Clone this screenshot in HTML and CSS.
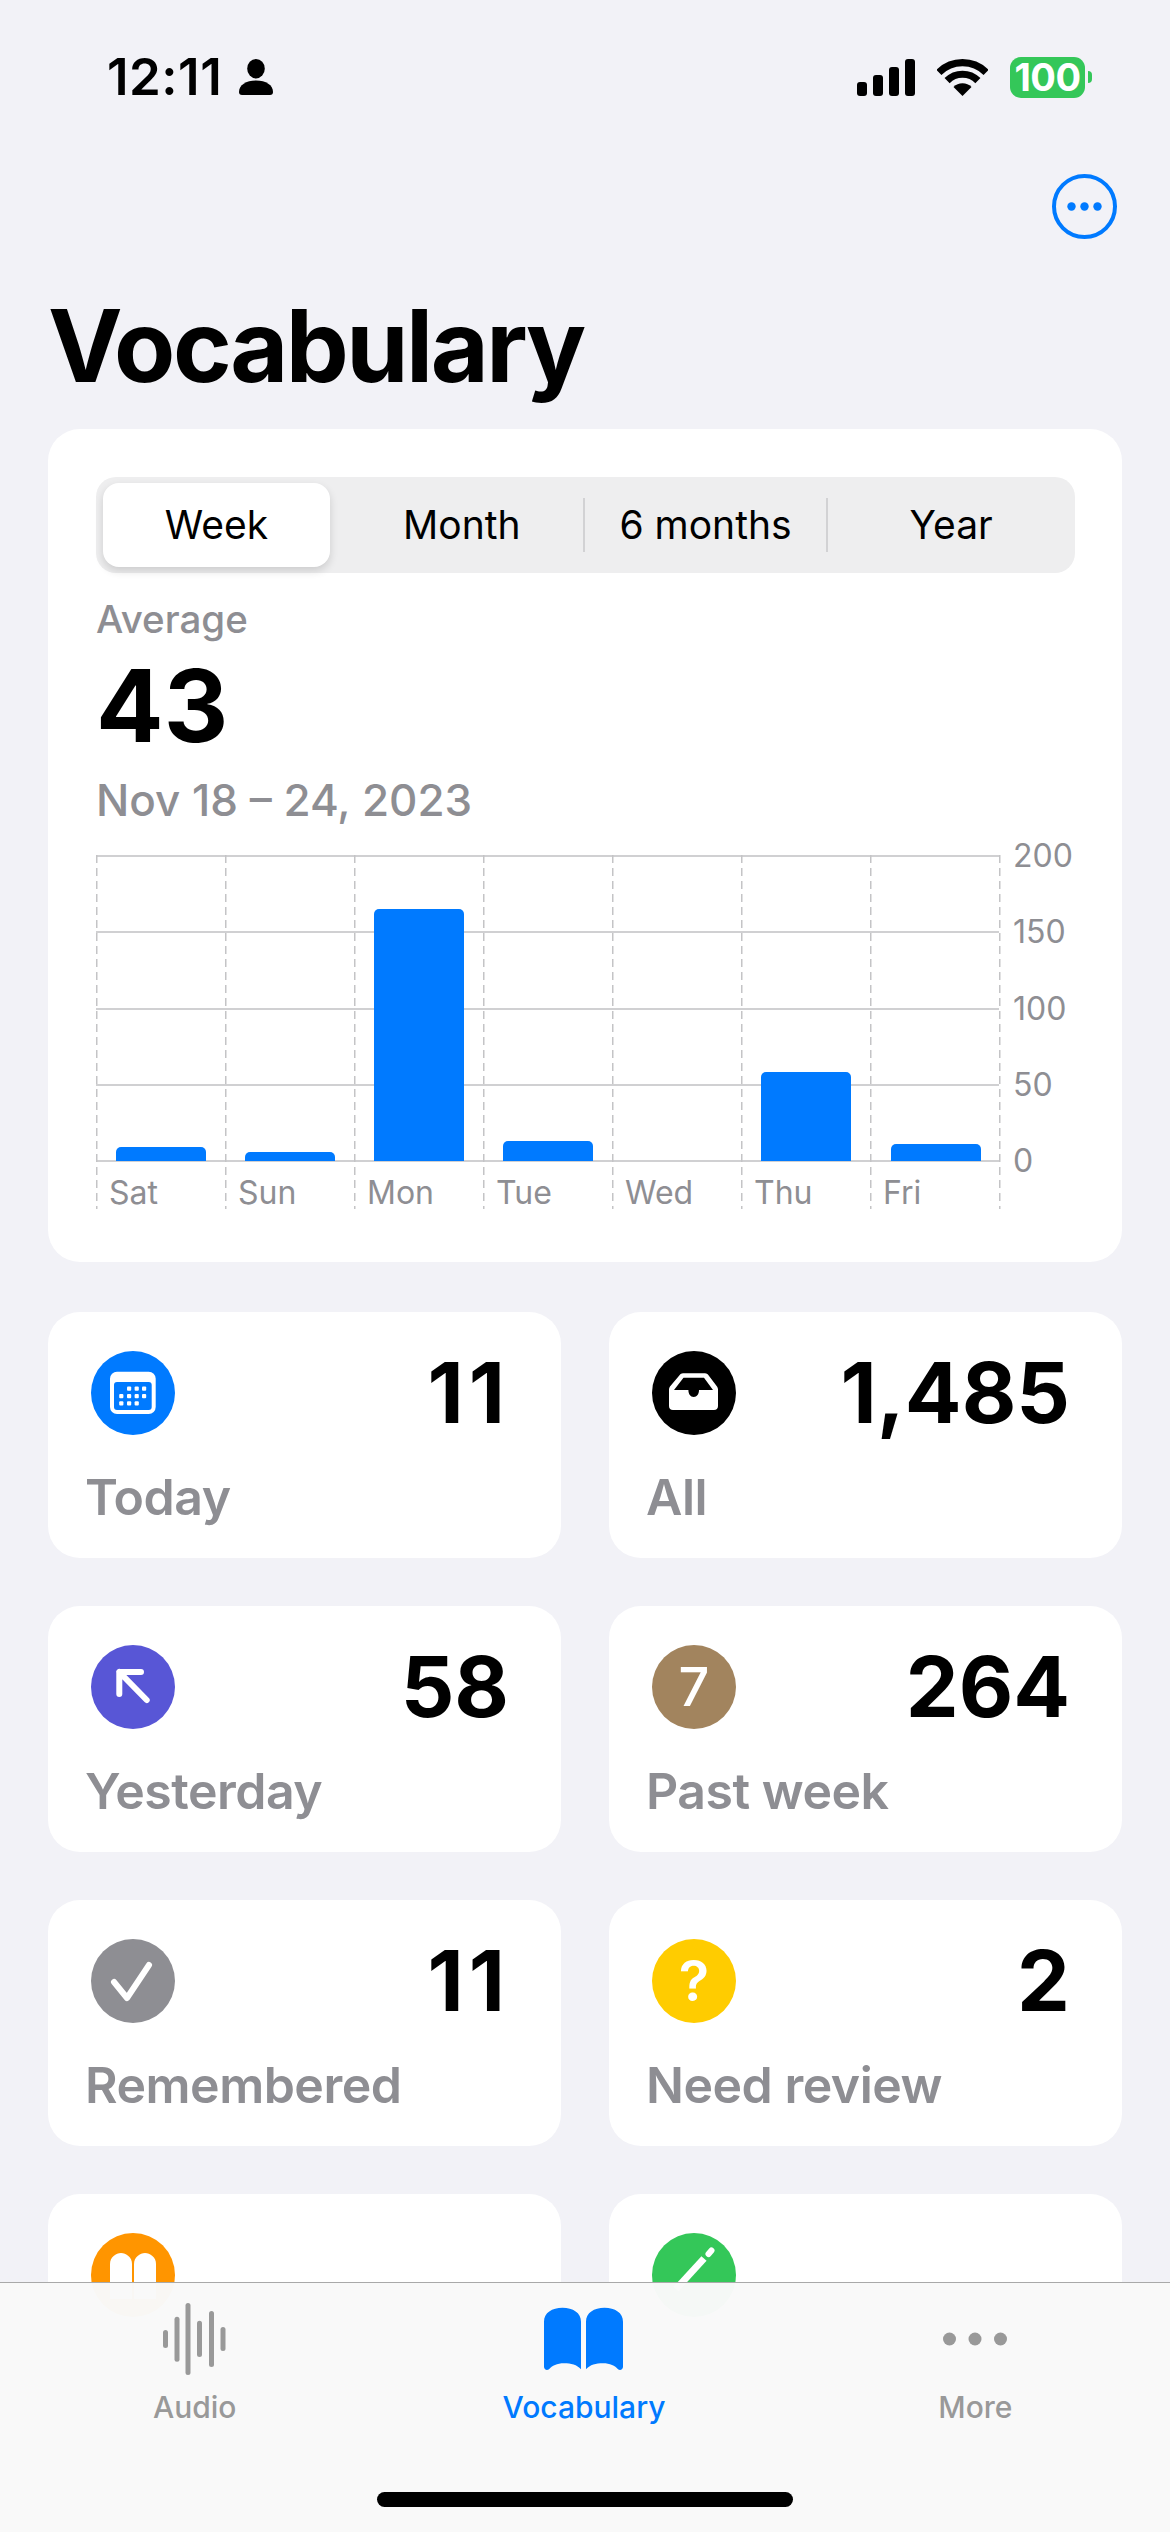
FILE: index.html
```html
<!DOCTYPE html>
<html lang="en">

<head>
    <meta charset="UTF-8">
    <meta name="viewport" content="width=device-width, initial-scale=1.0">
    <title>Vocabulary</title>
    <link rel="stylesheet" href="styles.css">
</head>

<body>
    <div class="screen">
        <div class="status-bar">
            <div class="status-left">
                <span class="status-time">12:11</span>
                <svg class="icon-person" width="34" height="36" viewBox="0 0 34 36">
                    <ellipse cx="17" cy="9.7" rx="8.8" ry="9.7" />
                    <path d="M0 33C0 26 7 21.5 17 21.5S34 26 34 33C34 35 33 36 31 36H3C1 36 0 35 0 33Z" />
                </svg>
            </div>
            <div class="status-right">
                <svg class="icon-signal" width="58" height="37" viewBox="0 0 58 37">
                    <rect x="0" y="23" width="10" height="14" rx="3" />
                    <rect x="16" y="16" width="10" height="21" rx="3" />
                    <rect x="32" y="8" width="10" height="29" rx="3" />
                    <rect x="48" y="0" width="10" height="37" rx="3" />
                </svg>
                <svg class="icon-wifi" width="51" height="37" viewBox="0 0 51 37">
                    <path d="M1.9 13.4A33.4 33.4 0 0 1 49.1 13.4" fill="none" stroke="#000" stroke-width="7.2" />
                    <path d="M10.1 21.6A21.8 21.8 0 0 1 40.9 21.6" fill="none" stroke="#000" stroke-width="7.2" />
                    <path d="M25.5 37L16.5 28A12.7 12.7 0 0 1 34.5 28Z" />
                </svg>
                <div class="battery">
                    <span class="battery-level">100</span>
                    <span class="battery-cap"></span>
                </div>
            </div>
        </div>

        <div class="nav-bar">
            <button class="more-button">
                <svg width="65" height="65" viewBox="0 0 65 65">
                    <circle cx="32.5" cy="32.5" r="30.5" fill="none" stroke="#007aff" stroke-width="4" />
                    <circle cx="19.5" cy="32.5" r="4.2" fill="#007aff" />
                    <circle cx="32.5" cy="32.5" r="4.2" fill="#007aff" />
                    <circle cx="45.5" cy="32.5" r="4.2" fill="#007aff" />
                </svg>
            </button>
        </div>

        <h1 class="titre">Vocabulary</h1>

        <div class="carte carte-graph">
            <div class="segments">
                <div class="segment segment-actif">Week</div>
                <div class="segment">Month</div>
                <div class="segment segment-sep">6 months</div>
                <div class="segment segment-sep">Year</div>
            </div>

            <div class="moyenne-label">Average</div>
            <div class="moyenne-valeur">43</div>
            <div class="moyenne-date">Nov 18 – 24, 2023</div>

            <div class="chart">
                <div class="plot">
                    <div class="gridlines">
                        <span></span>
                        <span></span>
                        <span></span>
                        <span></span>
                        <span></span>
                    </div>
                    <div class="jours">
                        <div class="jour">
                            <div class="bar-slot"><div class="bar" style="height: 14px"></div></div>
                            <span class="jour-label">Sat</span>
                        </div>
                        <div class="jour">
                            <div class="bar-slot"><div class="bar" style="height: 9px"></div></div>
                            <span class="jour-label">Sun</span>
                        </div>
                        <div class="jour">
                            <div class="bar-slot"><div class="bar" style="height: 252px"></div></div>
                            <span class="jour-label">Mon</span>
                        </div>
                        <div class="jour">
                            <div class="bar-slot"><div class="bar" style="height: 20px"></div></div>
                            <span class="jour-label">Tue</span>
                        </div>
                        <div class="jour">
                            <div class="bar-slot"></div>
                            <span class="jour-label">Wed</span>
                        </div>
                        <div class="jour">
                            <div class="bar-slot"><div class="bar" style="height: 89px"></div></div>
                            <span class="jour-label">Thu</span>
                        </div>
                        <div class="jour jour-dernier">
                            <div class="bar-slot"><div class="bar" style="height: 17px"></div></div>
                            <span class="jour-label">Fri</span>
                        </div>
                    </div>
                </div>
                <div class="y-axis">
                    <span>200</span>
                    <span>150</span>
                    <span>100</span>
                    <span>50</span>
                    <span>0</span>
                </div>
            </div>
        </div>

        <div class="stats">
            <div class="carte stat">
                <div class="stat-haut">
                    <svg class="stat-icone" viewBox="0 0 84 84">
                        <circle cx="42" cy="42" r="42" fill="#007aff" />
                        <rect x="19" y="20.7" width="45.7" height="42.3" rx="7" fill="#fff" />
                        <rect x="23" y="31" width="37.7" height="28" rx="3" fill="#007aff" />
                        <g fill="#fff">
                            <rect x="36" y="35.6" width="4.2" height="4.2" rx="1" />
                            <rect x="43.6" y="35.6" width="4.2" height="4.2" rx="1" />
                            <rect x="51" y="35.6" width="4.2" height="4.2" rx="1" />
                            <rect x="28.2" y="43" width="4.2" height="4.2" rx="1" />
                            <rect x="36" y="43" width="4.2" height="4.2" rx="1" />
                            <rect x="43.6" y="43" width="4.2" height="4.2" rx="1" />
                            <rect x="51" y="43" width="4.2" height="4.2" rx="1" />
                            <rect x="28.2" y="50.2" width="4.2" height="4.2" rx="1" />
                            <rect x="36" y="50.2" width="4.2" height="4.2" rx="1" />
                            <rect x="43.6" y="50.2" width="4.2" height="4.2" rx="1" />
                        </g>
                    </svg>
                    <span class="stat-nombre stat-nombre-large">11</span>
                </div>
                <div class="stat-label">Today</div>
            </div>

            <div class="carte stat">
                <div class="stat-haut">
                    <svg class="stat-icone" viewBox="0 0 84 84">
                        <circle cx="42" cy="42" r="42" fill="#000" />
                        <path d="M31 22.3H53C54.5 22.3 55.5 23 56.3 24L65 35.5C65.7 36.4 66 37.3 66 38.5V55C66 57.5 64.5 59 62 59H21C18.5 59 17 57.5 17 55V38.5C17 37.3 17.3 36.4 18 35.5L27.7 24C28.5 23 29.5 22.3 31 22.3Z" fill="#fff" />
                        <path d="M22 39L31.5 26.7H52L61 39H47C47 43 45 46 41.7 46S36.4 43 36.4 39Z" fill="#000" />
                    </svg>
                    <span class="stat-nombre">1,485</span>
                </div>
                <div class="stat-label">All</div>
            </div>

            <div class="carte stat">
                <div class="stat-haut">
                    <svg class="stat-icone" viewBox="0 0 84 84">
                        <circle cx="42" cy="42" r="42" fill="#5856d6" />
                        <path d="M28.3 49V27H50M28.3 27L55.7 55" fill="none" stroke="#fff" stroke-width="6" stroke-linecap="round" stroke-linejoin="round" />
                    </svg>
                    <span class="stat-nombre">58</span>
                </div>
                <div class="stat-label">Yesterday</div>
            </div>

            <div class="carte stat">
                <div class="stat-haut">
                    <span class="stat-icone stat-icone-texte icone-marron">7</span>
                    <span class="stat-nombre">264</span>
                </div>
                <div class="stat-label">Past week</div>
            </div>

            <div class="carte stat">
                <div class="stat-haut">
                    <svg class="stat-icone" viewBox="0 0 84 84">
                        <circle cx="42" cy="42" r="42" fill="#8e8e93" />
                        <path d="M23 43L36 59L58 26" fill="none" stroke="#fff" stroke-width="6" stroke-linecap="round" stroke-linejoin="round" />
                    </svg>
                    <span class="stat-nombre stat-nombre-large">11</span>
                </div>
                <div class="stat-label">Remembered</div>
            </div>

            <div class="carte stat">
                <div class="stat-haut">
                    <span class="stat-icone stat-icone-texte icone-jaune">?</span>
                    <span class="stat-nombre">2</span>
                </div>
                <div class="stat-label">Need review</div>
            </div>

            <div class="carte stat">
                <div class="stat-haut">
                    <svg class="stat-icone" viewBox="0 0 84 84">
                        <circle cx="42" cy="42" r="42" fill="#ff9500" />
                        <g fill="#fff">
                            <path d="M19 31C19 24 25 20 30 20S41 24 41 31V66H19Z" />
                            <path d="M43 31C43 24 49 20 54 20S65 24 65 31V66H43Z" />
                        </g>
                    </svg>
                </div>
            </div>

            <div class="carte stat">
                <div class="stat-haut">
                    <svg class="stat-icone" viewBox="0 0 84 84">
                        <circle cx="42" cy="42" r="42" fill="#34c759" />
                        <path d="M24 56L52 25.5" fill="none" stroke="#fff" stroke-width="7" />
                        <path d="M56.5 21L59.5 17.5" fill="none" stroke="#fff" stroke-width="6" stroke-linecap="round" />
                    </svg>
                </div>
            </div>
        </div>

        <div class="tab-bar">
            <div class="tabs">
                <div class="tab">
                    <svg class="tab-icone" width="64" height="72" viewBox="0 0 64 72" fill="#999">
                        <rect x="0" y="27" width="5" height="18" rx="2.5" />
                        <rect x="11.5" y="13.7" width="5" height="45" rx="2.5" />
                        <rect x="22.5" y="0" width="5" height="72" rx="2.5" />
                        <rect x="34" y="17.7" width="5" height="36.3" rx="2.5" />
                        <rect x="46" y="8" width="5" height="56" rx="2.5" />
                        <rect x="57.5" y="24" width="5" height="24" rx="2.5" />
                    </svg>
                    <span class="tab-label">Audio</span>
                </div>
                <div class="tab tab-actif">
                    <svg class="tab-icone" width="79" height="72" viewBox="0 0 79 72" fill="#007aff">
                        <g transform="translate(0 4.7)">
                            <path d="M0 14C0 5 8 0 18.5 0C29 0 37 5 37 14V61.5C33 57 27 55.5 20 55.5C13 55.5 8 58 5 61.5C3 63 0 62 0 59Z" />
                            <path d="M79 14C79 5 71 0 60.5 0C50 0 42 5 42 14V61.5C46 57 52 55.5 59 55.5C66 55.5 71 58 74 61.5C76 63 79 62 79 59Z" />
                        </g>
                    </svg>
                    <span class="tab-label">Vocabulary</span>
                </div>
                <div class="tab tab-plus">
                    <svg class="tab-icone" width="64" height="72" viewBox="0 0 64 72" fill="#999">
                        <circle cx="6.5" cy="36" r="6.5" />
                        <circle cx="32" cy="36" r="6.5" />
                        <circle cx="57.5" cy="36" r="6.5" />
                    </svg>
                    <span class="tab-label">More</span>
                </div>
            </div>
            <div class="home-indicator"></div>
        </div>
    </div>
</body>

</html>
```

FILE: styles.css
```css
* {
    box-sizing: border-box;
}

body {
    font-family: Inter, "Liberation Sans", sans-serif;
    background-color: #f2f2f7;
    color: #000;
    margin: 0;
    padding: 0;
}

.screen {
    position: relative;
    height: 2532px;
    overflow: hidden;
    padding: 0 48px;
}

.status-bar {
    display: flex;
    justify-content: space-between;
    align-items: center;
    height: 154px;
    padding: 0 30px 0 59px;
}

.status-left {
    display: flex;
    align-items: center;
    gap: 17px;
}

.status-time {
    font-size: 51px;
    font-weight: 600;
    line-height: 60px;
    letter-spacing: 0.5px;
}

.status-right {
    display: flex;
    align-items: center;
}

.icon-wifi {
    margin-left: 22px;
}

.battery {
    display: flex;
    align-items: center;
    margin-left: 22px;
}

.battery-level {
    display: block;
    width: 75px;
    height: 41px;
    border-radius: 11px;
    background-color: #34c759;
    color: #fff;
    font-size: 38px;
    font-weight: 700;
    line-height: 41px;
    text-align: center;
    letter-spacing: -0.5px;
}

.battery-cap {
    display: block;
    width: 4px;
    height: 12px;
    margin-left: 3px;
    border-radius: 0 4px 4px 0;
    background-color: #34c759;
}

.nav-bar {
    display: flex;
    justify-content: flex-end;
    padding: 20px 5px 0 0;
}

.more-button {
    display: block;
    width: 65px;
    height: 65px;
    padding: 0;
    border: none;
    background: none;
}

.more-button svg {
    display: block;
}

.titre {
    margin: 46px 0 23px;
    font-size: 100px;
    font-weight: 700;
    line-height: 121px;
    letter-spacing: -2.5px;
}

.carte {
    background-color: #fff;
    border-radius: 32px;
}

.carte-graph {
    height: 833px;
    padding: 48px 47px 0 48px;
}

.segments {
    display: flex;
    height: 96px;
    padding-right: 4px;
    border-radius: 20px;
    background-color: #eeeeef;
}

.segment {
    position: relative;
    flex: 1;
    font-size: 39px;
    line-height: 96px;
    text-align: center;
}

.segment-actif {
    flex: none;
    width: 227px;
    height: 84px;
    margin: 6px 10px 6px 7px;
    border-radius: 16px;
    background-color: #fff;
    box-shadow: 0 4px 8px rgba(0, 0, 0, 0.14);
    line-height: 84px;
}

.segment-sep::before {
    content: "";
    position: absolute;
    left: -1px;
    top: 21px;
    height: 54px;
    width: 2px;
    background-color: #d2d2d4;
}

.segment-sep:last-child {
    text-indent: 4px;
}

.moyenne-label {
    margin-top: 24px;
    font-size: 38.5px;
    font-weight: 500;
    line-height: 44px;
    color: #8e8e93;
}

.moyenne-valeur {
    margin-top: 10px;
    font-size: 100px;
    font-weight: 700;
    line-height: 110px;
}

.moyenne-date {
    margin-top: 14px;
    font-size: 44px;
    font-weight: 500;
    line-height: 50px;
    color: #8e8e93;
}

.chart {
    display: flex;
    gap: 12px;
    margin-top: 30px;
}

.plot {
    position: relative;
    width: 905px;
}

.gridlines {
    position: absolute;
    top: 0;
    left: 0;
    right: 2px;
    height: 307px;
    display: flex;
    flex-direction: column;
    justify-content: space-between;
}

.gridlines span {
    display: block;
    height: 2px;
    background-color: #d0d0d2;
}

.jours {
    position: relative;
    display: grid;
    grid-template-columns: repeat(7, 129px);
}

.jour {
    background-image: repeating-linear-gradient(to bottom, #c4c4c6 0, #c4c4c6 8px, transparent 8px, transparent 13px);
    background-size: 1.5px 100%;
    background-repeat: no-repeat;
}

.jour-dernier {
    width: 131px;
    background-image: repeating-linear-gradient(to bottom, #c4c4c6 0, #c4c4c6 8px, transparent 8px, transparent 13px), repeating-linear-gradient(to bottom, #c4c4c6 0, #c4c4c6 8px, transparent 8px, transparent 13px);
    background-size: 1.5px 100%, 1.5px 100%;
    background-position: left top, 129px top;
}

.bar-slot {
    display: flex;
    align-items: flex-end;
    justify-content: center;
    height: 306px;
    padding-left: 1px;
}

.bar {
    width: 90px;
    border-radius: 5px 5px 0 0;
    background-color: #007aff;
}

.jour-label {
    display: block;
    margin-top: 16px;
    padding-left: 13px;
    font-size: 32px;
    line-height: 32px;
    color: #8e8e93;
}

.y-axis {
    display: flex;
    flex-direction: column;
    justify-content: space-between;
    height: 307px;
    font-size: 32px;
    color: #8e8e93;
}

.y-axis span {
    display: block;
    height: 2px;
    line-height: 2px;
}

.stats {
    display: grid;
    grid-template-columns: 513px 513px;
    grid-auto-rows: 246px;
    gap: 48px;
    margin-top: 50px;
}

.stat {
    padding: 39px 52px 0 37px;
}

.stat-haut {
    display: flex;
    justify-content: space-between;
    align-items: center;
    height: 84px;
}

.stat-icone {
    display: block;
    flex: none;
    width: 84px;
    height: 84px;
    margin-left: 6px;
}

.stat-icone-texte {
    border-radius: 50%;
    color: #fff;
    font-weight: 500;
    text-align: center;
}

.icone-marron {
    background-color: #a2845e;
    font-size: 54px;
    line-height: 84px;
}

.icone-jaune {
    background-color: #ffcc00;
    font-weight: 600;
    font-size: 56px;
    line-height: 84px;
}

.stat-nombre {
    font-size: 84px;
    font-weight: 700;
    line-height: 84px;
}

.stat-nombre-large {
    letter-spacing: 5px;
    margin-right: -1px;
}

.stat-label {
    margin-top: 32px;
    font-size: 50px;
    font-weight: 600;
    line-height: 60px;
    letter-spacing: -0.5px;
    color: #8e8e93;
}

.tab-bar {
    position: absolute;
    left: 0;
    right: 0;
    bottom: 0;
    display: flex;
    flex-direction: column;
    height: 250px;
    border-top: 1px solid #a9a9a9;
    background-color: rgba(249, 249, 249, 0.98);
}

.tabs {
    display: grid;
    grid-template-columns: repeat(3, 1fr);
    padding: 20px 2px 0 0;
}

.tab {
    display: flex;
    flex-direction: column;
    align-items: center;
    gap: 14px;
    color: #999;
}

.tab-actif {
    color: #007aff;
}

.tab-plus {
    padding-left: 4px;
}

.tab-icone {
    display: block;
}

.tab-label {
    font-size: 30px;
    font-weight: 500;
    line-height: 36px;
}

.home-indicator {
    align-self: center;
    width: 416px;
    height: 15px;
    margin-top: auto;
    margin-bottom: 25px;
    border-radius: 8px;
    background-color: #000;
}
```
